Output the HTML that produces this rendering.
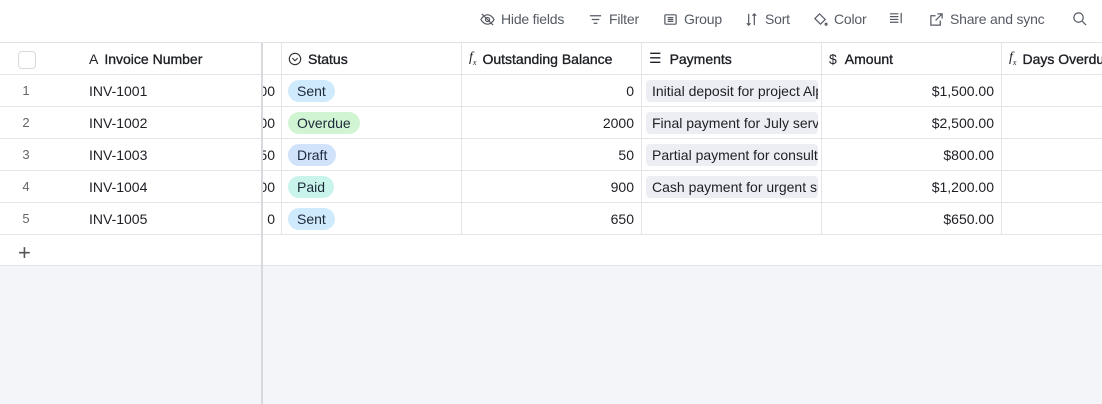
<!DOCTYPE html>
<html><head><style>
*{box-sizing:border-box;margin:0;padding:0}
body{width:1102px;height:404px;overflow:hidden;background:#f4f5f9;font-family:"Liberation Sans",sans-serif;font-size:14px;color:#1d1f25;position:relative}
.tb{position:absolute;left:0;top:0;width:1102px;height:43px;background:#fff;border-bottom:1px solid #e1e2e6}
.ti{position:absolute;top:11px;font-size:14px;color:#555a63;display:flex;align-items:center;gap:6px;letter-spacing:-0.2px}
.ti svg{width:15px;height:15px;stroke:#555a63;fill:none;stroke-width:1.3}
.grid{position:absolute;left:0;top:43px;width:1102px;height:223px;background:#fff}
.c{position:absolute;height:32px;border-bottom:1px solid #e4e5e8;border-right:1px solid #e4e5e8;display:flex;align-items:center;white-space:nowrap;overflow:hidden}
.h{font-weight:normal;-webkit-text-stroke:0.35px #1d1f25;font-size:14px;color:#1d1f25}
.h span,.h i{-webkit-text-stroke:0}
.pill{border-radius:12px;padding:3px 9px;font-size:14px;color:#1d2a3a}
.pay{background:#edeef4;border-radius:4px;padding:3px 6px;width:172px;overflow:hidden;margin-left:4px}
.num{justify-content:flex-end;padding-right:7px}
.rn{color:#666;font-size:13px;justify-content:center}
.r{position:absolute;left:0;width:1102px;height:32px;background:#fff}
</style></head><body>
<div class="tb">
<div class="ti" style="left:480px"><svg viewBox="0 0 16 16"><path d="M1 8s2.5-5 7-5 7 5 7 5-2.5 5-7 5-7-5-7-5z"/><circle cx="8" cy="8" r="2.2"/><path d="M2 2l12 12"/></svg>Hide fields</div>
<div class="ti" style="left:588px"><svg viewBox="0 0 16 16"><path d="M2 4h12M4 8h8M6 12h4"/></svg>Filter</div>
<div class="ti" style="left:663px"><svg viewBox="0 0 16 16"><rect x="2" y="3" width="12" height="10" rx="1"/><path d="M5 6h6M5 8h6M5 10h6"/></svg>Group</div>
<div class="ti" style="left:744px"><svg viewBox="0 0 16 16"><path d="M5 2v12M3 12l2 2 2-2M11 14V2M9 4l2-2 2 2"/></svg>Sort</div>
<div class="ti" style="left:813px"><svg viewBox="0 0 16 16"><path d="M7 2l6 6-5 5-6-6 2-2z"/><circle cx="14" cy="13" r="1"/></svg>Color</div>
<div class="ti" style="left:889px"><svg viewBox="0 0 16 16"><path d="M1 3h9M1 6h9M1 9h9M1 12h9M13 2v11"/></svg></div>
<div class="ti" style="left:929px"><svg viewBox="0 0 16 16"><path d="M12 9v5H2V4h5M9 2h5v5M14 2L7 9"/></svg>Share and sync</div>
<div class="ti" style="left:1072px"><svg viewBox="0 0 16 16"><circle cx="7" cy="7" r="5"/><path d="M11 11l4 4"/></svg></div>
</div>
<div class="grid">
<div class="c" style="left:0;top:0;width:75px;height:32px;border-right:none;justify-content:center;padding-left:2px;padding-top:2px"><div style="width:18px;height:18px;border:1px solid #d8d9dd;border-radius:4px;margin-left:-24px"></div></div>
<div class="c h" style="left:75px;top:0;width:187px;border-right:none;padding-left:14px"><span style="margin-right:6px">A</span>Invoice Number</div>
<div class="c" style="left:262px;top:0;width:20px"></div>
<div class="c h" style="left:282px;top:0;width:180px;padding-left:6px"><svg width="14" height="14" viewBox="0 0 16 16" style="margin-right:6px"><circle cx="8" cy="8" r="6.5" fill="none" stroke="#333" stroke-width="1.3"/><path d="M5 7l3 3 3-3" fill="none" stroke="#333" stroke-width="1.3"/></svg>Status</div>
<div class="c h" style="left:462px;top:0;width:180px;padding-left:7px"><i style="font-family:'Liberation Serif';margin-right:6px">f<sub style="font-size:8px">x</sub></i>Outstanding Balance</div>
<div class="c h" style="left:642px;top:0;width:180px;padding-left:7px"><span style="margin-right:8px">☰</span>Payments</div>
<div class="c h" style="left:822px;top:0;width:180px;padding-left:7px"><span style="margin-right:8px">$</span>Amount</div>
<div class="c h" style="left:1002px;top:0;width:120px;padding-left:7px"><i style="font-family:'Liberation Serif';margin-right:6px">f<sub style="font-size:8px">x</sub></i>Days Overdue</div>
</div>
<div style="position:absolute;left:0;top:235px;width:1102px;height:31px;background:#fff;border-bottom:1px solid #e1e2e6"></div>
<div style="position:absolute;left:18px;top:240px;font-size:22px;color:#555;font-weight:300">+</div>
<div class="r" style="top:75px">
<div class="c rn" style="left:0;width:52px;border-right:none">1</div>
<div class="c" style="left:52px;width:210px;border-right:none;padding-left:37px">INV-1001</div>
<div class="c num" style="left:262px;width:20px;padding-right:6px">00</div>
<div class="c" style="left:282px;width:180px;padding-left:6px"><span class="pill" style="background:#cfeafc">Sent</span></div>
<div class="c num" style="left:462px;width:180px">0</div>
<div class="c" style="left:642px;width:180px"><span class="pay">Initial deposit for project Alpha</span></div>
<div class="c num" style="left:822px;width:180px">$1,500.00</div>
<div class="c" style="left:1002px;width:100px;border-right:none"></div></div>
<div class="r" style="top:107px">
<div class="c rn" style="left:0;width:52px;border-right:none">2</div>
<div class="c" style="left:52px;width:210px;border-right:none;padding-left:37px">INV-1002</div>
<div class="c num" style="left:262px;width:20px;padding-right:6px">00</div>
<div class="c" style="left:282px;width:180px;padding-left:6px"><span class="pill" style="background:#d1f5d3">Overdue</span></div>
<div class="c num" style="left:462px;width:180px">2000</div>
<div class="c" style="left:642px;width:180px"><span class="pay">Final payment for July services</span></div>
<div class="c num" style="left:822px;width:180px">$2,500.00</div>
<div class="c" style="left:1002px;width:100px;border-right:none"></div></div>
<div class="r" style="top:139px">
<div class="c rn" style="left:0;width:52px;border-right:none">3</div>
<div class="c" style="left:52px;width:210px;border-right:none;padding-left:37px">INV-1003</div>
<div class="c num" style="left:262px;width:20px;padding-right:6px">50</div>
<div class="c" style="left:282px;width:180px;padding-left:6px"><span class="pill" style="background:#d1e2fb">Draft</span></div>
<div class="c num" style="left:462px;width:180px">50</div>
<div class="c" style="left:642px;width:180px"><span class="pay">Partial payment for consulting</span></div>
<div class="c num" style="left:822px;width:180px">$800.00</div>
<div class="c" style="left:1002px;width:100px;border-right:none"></div></div>
<div class="r" style="top:171px">
<div class="c rn" style="left:0;width:52px;border-right:none">4</div>
<div class="c" style="left:52px;width:210px;border-right:none;padding-left:37px">INV-1004</div>
<div class="c num" style="left:262px;width:20px;padding-right:6px">00</div>
<div class="c" style="left:282px;width:180px;padding-left:6px"><span class="pill" style="background:#c8f4ec">Paid</span></div>
<div class="c num" style="left:462px;width:180px">900</div>
<div class="c" style="left:642px;width:180px"><span class="pay">Cash payment for urgent supplies</span></div>
<div class="c num" style="left:822px;width:180px">$1,200.00</div>
<div class="c" style="left:1002px;width:100px;border-right:none"></div></div>
<div class="r" style="top:203px">
<div class="c rn" style="left:0;width:52px;border-right:none">5</div>
<div class="c" style="left:52px;width:210px;border-right:none;padding-left:37px">INV-1005</div>
<div class="c num" style="left:262px;width:20px;padding-right:6px">0</div>
<div class="c" style="left:282px;width:180px;padding-left:6px"><span class="pill" style="background:#cfeafc">Sent</span></div>
<div class="c num" style="left:462px;width:180px">650</div>
<div class="c" style="left:642px;width:180px"></div>
<div class="c num" style="left:822px;width:180px">$650.00</div>
<div class="c" style="left:1002px;width:100px;border-right:none"></div></div>
<div style="position:absolute;left:261px;top:43px;width:2px;height:361px;background:#d8d9dd"></div>
</body></html>
